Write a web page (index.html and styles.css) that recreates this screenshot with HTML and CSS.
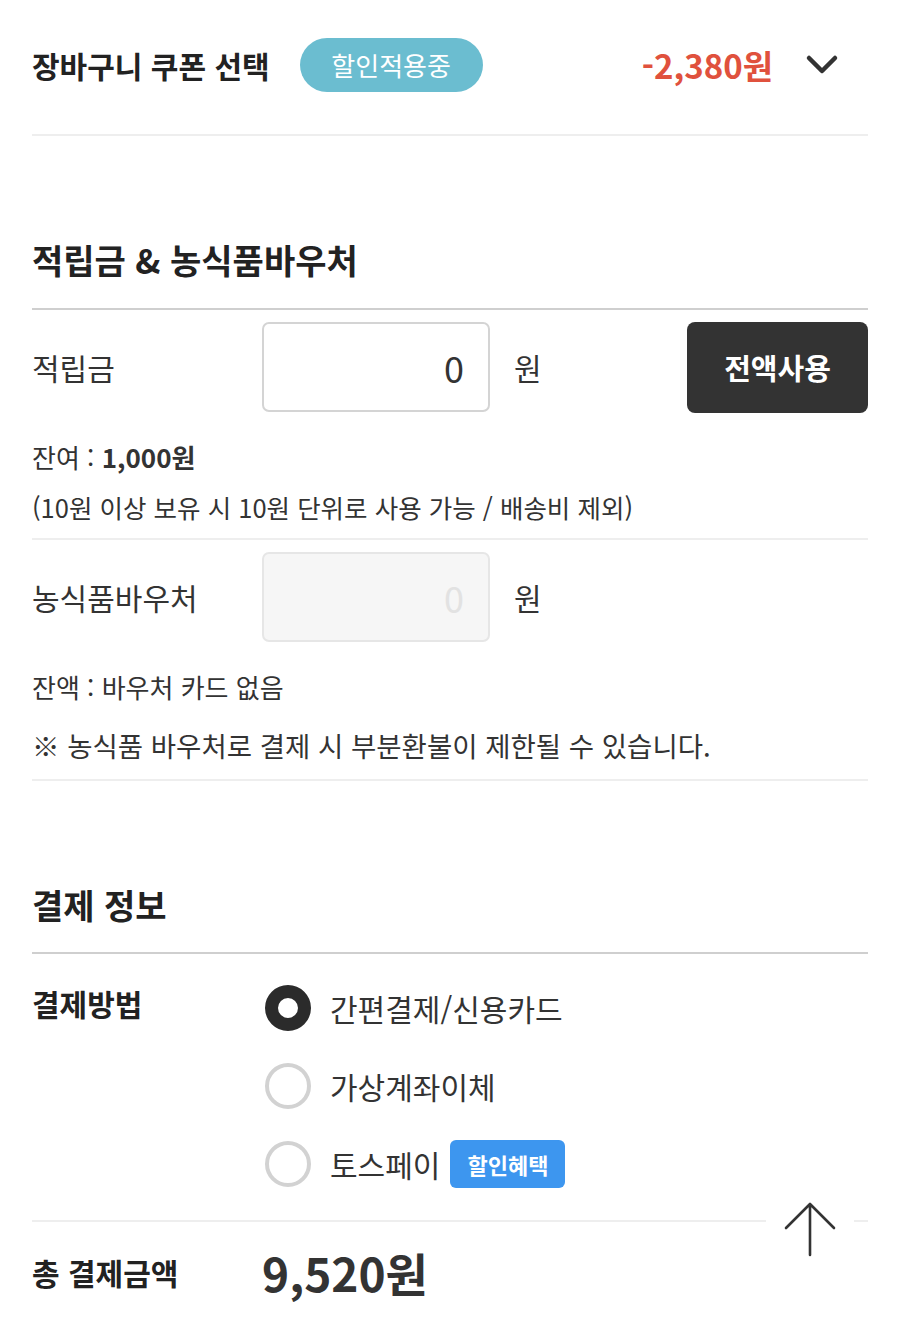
FILE: index.html
```html
<!DOCTYPE html>
<html lang="ko">
<head>
    <meta charset="UTF-8">
    <meta name="viewport" content="width=device-width, initial-scale=1.0">
    <title>주문서</title>
    <link rel="stylesheet" href="styles.css">
</head>
<body>
    <div class="page">
        <!-- coupon -->
        <div class="coupon-row">
            <span class="coupon-title">장바구니 쿠폰 선택</span>
            <span class="coupon-badge">할인적용중</span>
            <span class="coupon-price">-2,380원</span>
            <svg class="chevron" width="34" height="24" viewBox="0 0 34 24">
                <path d="M4 5 L17 18 L30 5" fill="none" stroke="#333" stroke-width="4.5" stroke-linecap="round" stroke-linejoin="round"/>
            </svg>
        </div>
        <div class="line light coupon-line"></div>

        <!-- points & voucher -->
        <h2 class="section-title first">적립금 &amp; 농식품바우처</h2>
        <div class="line dark"></div>

        <div class="field-row">
            <span class="field-label">적립금</span>
            <div class="amount-box">0</div>
            <span class="unit">원</span>
            <button class="use-all">전액사용</button>
        </div>
        <p class="note first-note">잔여 : <b>1,000원</b></p>
        <p class="note small">(10원 이상 보유 시 10원 단위로 사용 가능 / 배송비 제외)</p>
        <div class="line light gap-6"></div>

        <div class="field-row">
            <span class="field-label">농식품바우처</span>
            <div class="amount-box disabled">0</div>
            <span class="unit">원</span>
        </div>
        <p class="note first-note">잔액 : 바우처 카드 없음</p>
        <p class="note warn">※ 농식품 바우처로 결제 시 부분환불이 제한될 수 있습니다.</p>
        <div class="line light gap-9"></div>

        <!-- payment -->
        <h2 class="section-title second">결제 정보</h2>
        <div class="line dark gap-23"></div>

        <div class="pay-grid">
            <span class="pay-label">결제방법</span>
            <div class="pay-options">
                <label class="pay-option"><span class="radio checked"></span>간편결제/신용카드</label>
                <label class="pay-option"><span class="radio"></span>가상계좌이체</label>
                <label class="pay-option"><span class="radio"></span>토스페이<span class="benefit">할인혜택</span></label>
            </div>
        </div>

        <div class="total-wrap">
            <div class="line light"></div>
            <button class="to-top">
                <svg width="56" height="58" viewBox="0 0 56 58">
                    <path d="M28 55 V4 M4 28 L28 4 L52 28" fill="none" stroke="#333" stroke-width="2.6" stroke-linecap="round" stroke-linejoin="round"/>
                </svg>
            </button>
            <div class="total-row">
                <span class="total-label">총 결제금액</span>
                <span class="total-price">9,520원</span>
            </div>
        </div>
    </div>
</body>
</html>
```

FILE: styles.css
```css
body {
    margin: 0;
    padding: 0;
    background-color: #fff;
    font-family: "Noto Sans CJK KR", "Noto Sans", sans-serif;
    color: #333;
}

.page {
    padding: 0 32px;
}

.line {
    height: 2px;
    background-color: #eee;
}

.line.dark {
    background-color: #cfcfcf;
}

.coupon-row {
    display: flex;
    align-items: center;
    padding-top: 38px;
    height: 54px;
}

.coupon-title {
    font-size: 30px;
    font-weight: 700;
    color: #222;
}

.coupon-badge {
    margin-left: 30px;
    width: 183px;
    height: 54px;
    line-height: 54px;
    border-radius: 27px;
    background-color: #6bbdd0;
    color: #fff;
    font-size: 26px;
    text-align: center;
}

.coupon-price {
    margin-left: auto;
    font-size: 33px;
    font-weight: 700;
    color: #e0513d;
}

.chevron {
    margin-left: 32px;
    margin-right: 29px;
}

.coupon-line {
    margin-top: 42px;
}

.section-title {
    margin: 0;
    height: 48px;
    line-height: 48px;
    font-size: 34px;
    font-weight: 700;
    color: #222;
}

.section-title.first {
    margin-top: 100px;
    margin-bottom: 24px;
}

.section-title.second {
    margin-top: 100px;
}

.field-row {
    display: flex;
    align-items: center;
    margin-top: 12px;
    height: 90px;
}

.field-label {
    width: 230px;
    font-size: 30px;
}

.amount-box {
    box-sizing: border-box;
    width: 228px;
    height: 90px;
    padding-right: 24px;
    border: 2px solid #d4d4d4;
    border-radius: 7px;
    font-size: 36px;
    line-height: 86px;
    text-align: right;
    color: #333;
}

.amount-box.disabled {
    background-color: #f6f6f6;
    border-color: #e6e6e6;
    color: #e2e2e2;
}

.unit {
    margin-left: 24px;
    font-size: 30px;
}

.use-all {
    margin-left: auto;
    width: 181px;
    height: 91px;
    border: none;
    border-radius: 8px;
    background-color: #333;
    color: #fff;
    font-family: inherit;
    font-size: 29px;
    font-weight: 700;
}

.note {
    margin: 0;
    height: 50px;
    line-height: 50px;
    font-size: 26px;
    color: #333;
}

.note.small {
    font-size: 25.5px;
}

.note.first-note {
    margin-top: 20px;
}

.note.warn {
    margin-top: 8px;
    font-size: 27.5px;
}

.gap-6 {
    margin-top: 6px;
}

.gap-9 {
    margin-top: 9px;
}

.gap-23 {
    margin-top: 23px;
}

.pay-grid {
    display: grid;
    grid-template-columns: 233px 1fr;
    margin-top: 15px;
}

.pay-label {
    padding-top: 12px;
    font-size: 30px;
    font-weight: 700;
    color: #222;
}

.pay-option {
    display: flex;
    align-items: center;
    height: 78px;
    font-size: 30px;
}

.radio {
    box-sizing: border-box;
    width: 46px;
    height: 46px;
    margin-right: 19px;
    border: 4px solid #d2d2d2;
    border-radius: 50%;
}

.radio.checked {
    border: 13px solid #2b2b2b;
}

.benefit {
    margin-left: 10px;
    padding: 0 17px;
    height: 48px;
    line-height: 48px;
    border-radius: 6px;
    background-color: #3d96ef;
    color: #fff;
    font-size: 22px;
    font-weight: 700;
}

.total-wrap {
    position: relative;
    margin-top: 17px;
}

.to-top {
    position: absolute;
    top: -20px;
    right: 14px;
    width: 88px;
    height: 60px;
    padding: 0;
    border: none;
    background-color: #fff;
}

.total-row {
    display: flex;
    align-items: center;
    height: 100px;
}

.total-label {
    width: 230px;
    font-size: 30px;
    font-weight: 700;
    color: #222;
}

.total-price {
    font-size: 46px;
    font-weight: 700;
    color: #333;
}
```
